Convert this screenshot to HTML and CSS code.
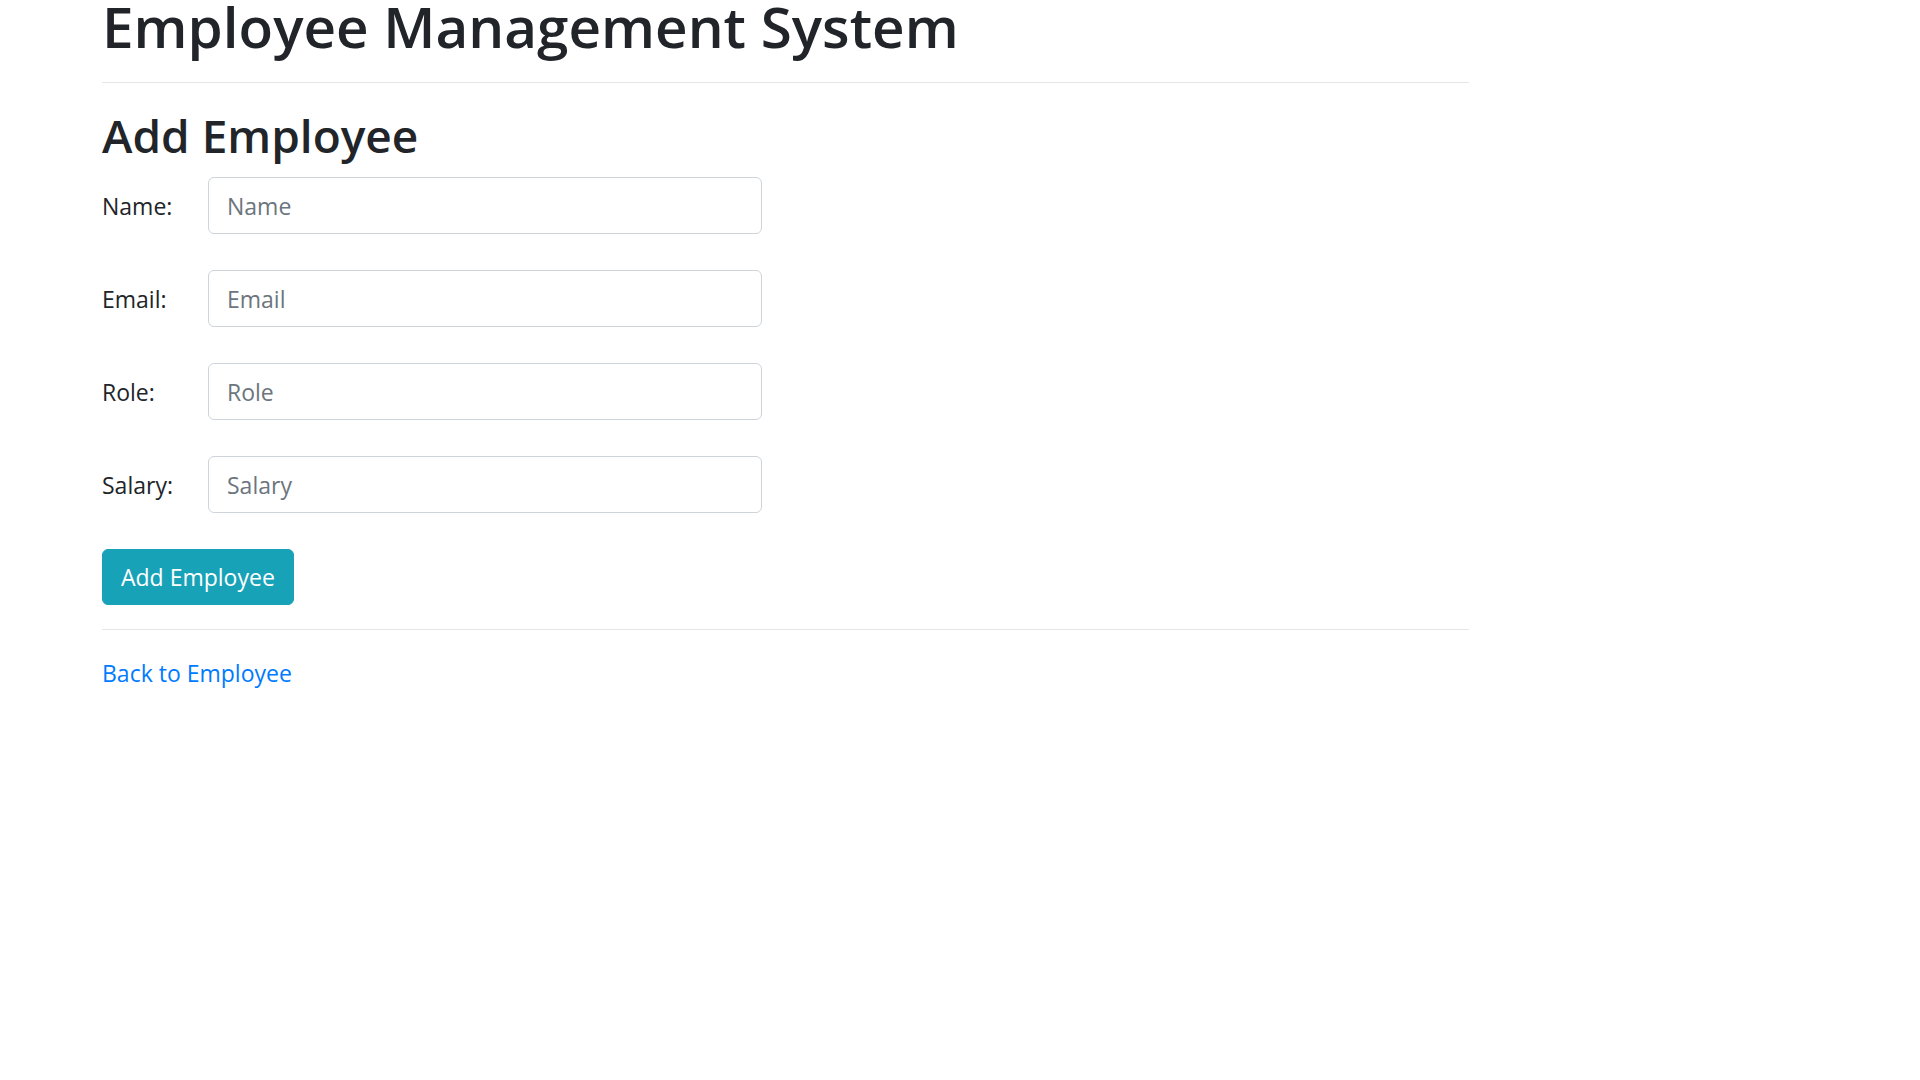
FILE: index.html
```html
<!DOCTYPE html>
<html lang="en">
<head>
<meta charset="utf-8">
<title>Employee Management System</title>
<link rel="stylesheet" href="styles.css">
</head>
<body>
<div class="page">
  <h1 class="title">Employee Management System</h1>
  <hr class="rule rule-top">
  <h2 class="subtitle">Add Employee</h2>
  <form class="form">
    <div class="form-row">
      <label class="form-label" for="name">Name:</label>
      <input class="form-input" id="name" type="text" placeholder="Name">
    </div>
    <div class="form-row">
      <label class="form-label" for="email">Email:</label>
      <input class="form-input" id="email" type="text" placeholder="Email">
    </div>
    <div class="form-row">
      <label class="form-label" for="role">Role:</label>
      <input class="form-input" id="role" type="text" placeholder="Role">
    </div>
    <div class="form-row">
      <label class="form-label" for="salary">Salary:</label>
      <input class="form-input" id="salary" type="text" placeholder="Salary">
    </div>
    <button class="btn-info" type="button">Add Employee</button>
  </form>
  <hr class="rule rule-bottom">
  <p class="back"><a class="back-link" href="#">Back to Employee</a></p>
</div>
</body>
</html>
```

FILE: styles.css
```css
* { box-sizing: border-box; }
html, body {
  margin: 0;
  padding: 0;
  background: #fff;
}
body {
  font-family: "Open Sans", "Noto Sans", sans-serif;
  color: #212529;
  font-size: 23px;
  overflow: hidden;
}
.page {
  margin-left: 102px;
  width: 1367px;
}
.title {
  margin: -9px 0 0;
  font-size: 56.6px;
  font-weight: 600;
  line-height: 72px;
  white-space: nowrap;
}
.rule {
  border: 0;
  border-top: 1.5px solid rgba(0, 0, 0, 0.1);
  height: 0;
  margin: 0;
}
.rule-top { margin-top: 19px; }
.subtitle {
  margin: 24px 0 12px;
  font-size: 46px;
  font-weight: 600;
  line-height: 57.6px;
}
.form {
  display: flex;
  flex-direction: column;
  align-items: flex-start;
}
.form-row {
  display: flex;
  align-items: center;
  margin-bottom: 36px;
}
.form-label {
  width: 106px;
  line-height: 36px;
  padding-top: 2px;
}
.form-input {
  width: 554px;
  height: 57px;
  padding: 2px 18px 0;
  border: 1.5px solid #ced4da;
  border-radius: 6px;
  font-family: inherit;
  font-size: 23px;
  color: #495057;
  background: #fff;
}
.form-input::placeholder { color: #6c757d; }
.btn-info {
  height: 56px;
  min-width: 191px;
  padding: 0 18px;
  border: 1.5px solid #17a2b8;
  border-radius: 6px;
  background: #17a2b8;
  color: #fff;
  font-family: inherit;
  font-size: 23px;
}
.rule-bottom { margin-top: 24px; }
.back {
  margin: 25px 0 0;
  line-height: 36px;
}
.back-link {
  color: #007bff;
  text-decoration: none;
}
```
